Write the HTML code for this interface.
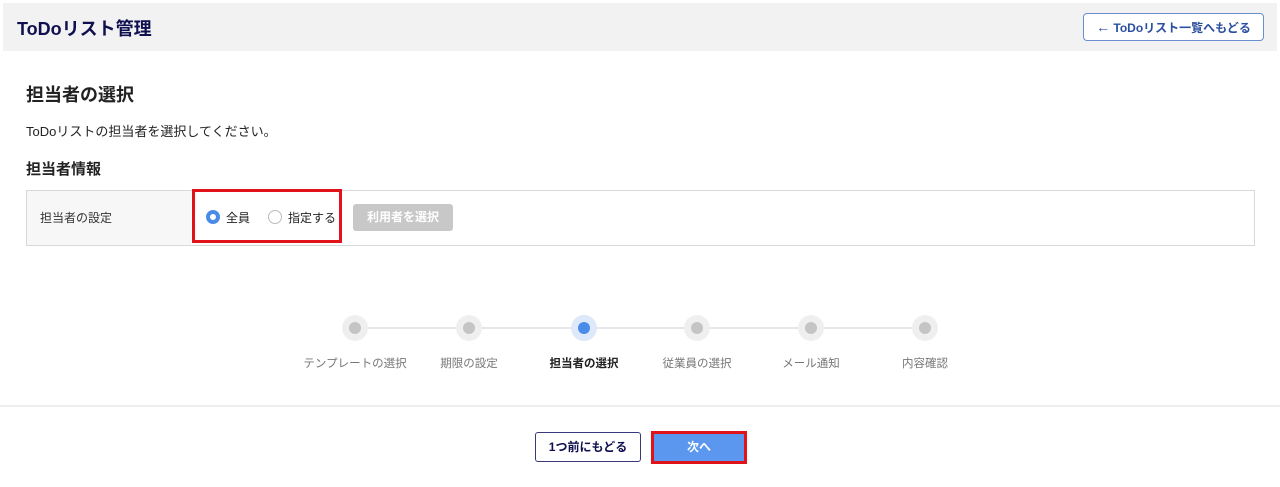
<!DOCTYPE html>
<html><head><meta charset="utf-8"><style>
*{margin:0;padding:0;box-sizing:border-box}
body{width:1280px;height:487px;background:#fff;font-family:"Liberation Sans","Noto Sans CJK JP",sans-serif;color:#222;position:relative;overflow:hidden}
.abs{position:absolute}
.hdr{left:3px;top:3px;width:1274px;height:48px;background:#f2f2f2}
.title{left:17px;top:15px;font-size:18px;font-weight:bold;color:#101050}
.backlist{left:1083px;top:13px;width:181px;height:28px;border:1px solid #6a8fd0;border-radius:4px;background:#fff;color:#2a4fa0;font-size:12px;font-weight:bold;text-align:center;line-height:26px}
.h1{left:26px;top:81px;font-size:18px;font-weight:bold}
.desc{left:26px;top:121px;font-size:13px}
.h2{left:26px;top:158px;font-size:15px;font-weight:bold}
.tbl{left:26px;top:190px;width:1229px;height:56px;border:1px solid #d8d8d8}
.lab{left:0;top:0;width:164px;height:54px;background:#f7f7f7;font-size:12px;line-height:54px;padding-left:13px;color:#333}
.red{border:3px solid #e0121a}
.radio{width:14px;height:14px;border-radius:50%}
.sel{left:353px;top:204px;width:100px;height:27px;background:#c8c8c8;border-radius:3px;color:#fff;font-size:12px;font-weight:bold;text-align:center;line-height:27px}
.line{top:327px;height:2px;background:#e6e6e6}
.dot{width:26px;height:26px;border-radius:50%;background:#efefef;top:315px}
.dot i{position:absolute;left:7px;top:7px;width:12px;height:12px;border-radius:50%;background:#c4c4c4}
.lbl{top:355px;font-size:11.5px;color:#777;width:120px;text-align:center}
</style></head><body>
<div class="abs hdr"></div>
<div class="abs title">ToDoリスト管理</div>
<div class="abs backlist"><span style="font-size:14px;font-weight:normal">←</span> ToDoリスト一覧へもどる</div>
<div class="abs h1">担当者の選択</div>
<div class="abs desc">ToDoリストの担当者を選択してください。</div>
<div class="abs h2">担当者情報</div>
<div class="abs tbl"><div class="abs lab">担当者の設定</div></div>
<div class="abs red" style="left:192px;top:189px;width:150px;height:54px"></div>
<div class="abs radio" style="left:206px;top:210px;background:#fff;border:4px solid #4a8be8"></div>
<div class="abs" style="left:226px;top:209px;font-size:12px">全員</div>
<div class="abs radio" style="left:268px;top:210px;border:1px solid #bbb"></div>
<div class="abs" style="left:288px;top:209px;font-size:12px">指定する</div>
<div class="abs sel">利用者を選択</div>
<div class="abs line" style="left:355px;width:570px"></div>
<div class="abs dot" style="left:342px"><i></i></div>
<div class="abs dot" style="left:456px"><i></i></div>
<div class="abs dot" style="left:571px;background:#dde9fb"><i style="background:#4a8be8"></i></div>
<div class="abs dot" style="left:684px"><i></i></div>
<div class="abs dot" style="left:798px"><i></i></div>
<div class="abs dot" style="left:912px"><i></i></div>
<div class="abs lbl" style="left:295px">テンプレートの選択</div>
<div class="abs lbl" style="left:409px">期限の設定</div>
<div class="abs lbl" style="left:524px;color:#222;font-weight:bold">担当者の選択</div>
<div class="abs lbl" style="left:637px">従業員の選択</div>
<div class="abs lbl" style="left:751px">メール通知</div>
<div class="abs lbl" style="left:865px">内容確認</div>
<div class="abs" style="left:0;top:405px;width:1280px;height:2px;background:#eee"></div>
<div class="abs" style="left:535px;top:432px;width:106px;height:30px;border:1px solid #3a3a7a;border-radius:3px;color:#101050;font-size:12px;font-weight:bold;text-align:center;line-height:28px">1つ前にもどる</div>
<div class="abs red" style="left:651px;top:431px;width:96px;height:33px;background:#5b97ee;color:#fff;font-size:12px;font-weight:bold;text-align:center;line-height:27px">次へ</div>
</body></html>
